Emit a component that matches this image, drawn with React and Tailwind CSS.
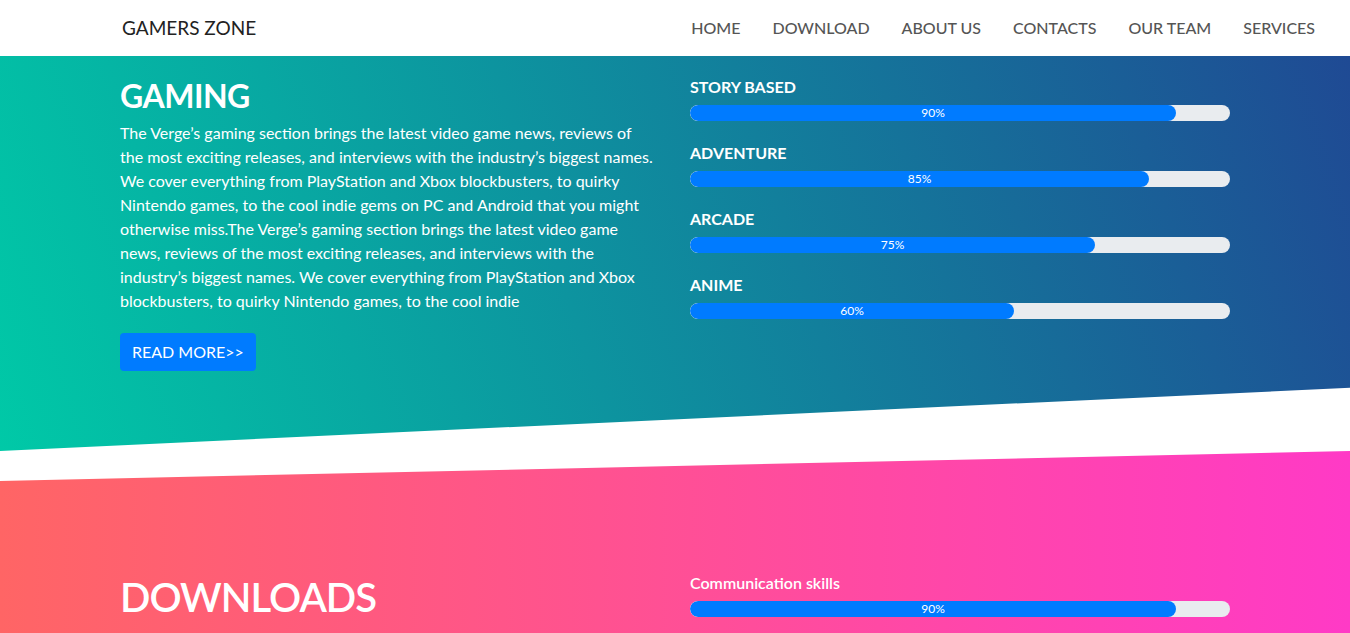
import React from "react";

const font = { fontFamily: "Lato, 'Noto Sans', sans-serif" };

function Bar({ label, value }) {
  return (
    <div className="mb-[20px]">
      <div className="text-[16px] leading-[24px] font-bold text-white">{label}</div>
      <div className="mt-[6px] h-[16px] w-[540px] rounded-full bg-[#e9ecef] flex overflow-hidden">
        <div
          className="h-full rounded-full bg-[#007bff] text-white text-[12px] leading-[16px] text-center"
          style={{ width: `${value}%` }}
        >
          {value}%
        </div>
      </div>
    </div>
  );
}

const lines = [
  "The Verge’s gaming section brings the latest video game news, reviews of",
  "the most exciting releases, and interviews with the industry’s biggest names.",
  "We cover everything from PlayStation and Xbox blockbusters, to quirky",
  "Nintendo games, to the cool indie gems on PC and Android that you might",
  "otherwise miss.The Verge’s gaming section brings the latest video game",
  "news, reviews of the most exciting releases, and interviews with the",
  "industry’s biggest names. We cover everything from PlayStation and Xbox",
  "blockbusters, to quirky Nintendo games, to the cool indie",
];

export default function App() {
  const links = ["HOME", "DOWNLOAD", "ABOUT US", "CONTACTS", "OUR TEAM", "SERVICES"];
  return (
    <div style={font} className="w-full overflow-hidden bg-white">
      <nav className="h-[56px] flex items-center justify-between pl-[122px] pr-[35px] bg-white">
        <div className="text-[19px] text-[#222]">GAMERS ZONE</div>
        <ul className="flex gap-[32px] text-[16px] font-medium text-[#555]">
          {links.map((l) => (
            <li key={l}>{l}</li>
          ))}
        </ul>
      </nav>

      <section className="h-[395px] bg-[linear-gradient(72deg,#00c9a7,#1f4a94)] [clip-path:polygon(0_0,100%_0,100%_84%,0_100%)]">
        <div className="flex pl-[120px] pt-[18px]">
          <div className="w-[570px] pr-[30px]">
            <h2 className="text-[32px] leading-[43px] font-bold tracking-[-0.5px] text-white mb-[4px]">GAMING</h2>
            <p className="text-[16px] leading-[24px] text-white w-[560px] whitespace-nowrap">
              {lines.map((l, i) => (
                <React.Fragment key={i}>
                  {l}
                  {i < lines.length - 1 && <br />}
                </React.Fragment>
              ))}
            </p>
            <button className="mt-[20px] h-[38px] px-[12px] rounded-[4px] bg-[#007bff] text-white text-[16px]">
              READ MORE&gt;&gt;
            </button>
          </div>
          <div className="pt-[1px]">
            <Bar label="STORY BASED" value={90} />
            <Bar label="ADVENTURE" value={85} />
            <Bar label="ARCADE" value={75} />
            <Bar label="ANIME" value={60} />
          </div>
        </div>
      </section>

      <section className="h-[300px] bg-[linear-gradient(to_right,#ff6565,#ff3ac6)] [clip-path:polygon(0_30px,100%_0,100%_100%,0_100%)]">
        <div className="flex pl-[120px] pt-[119px]">
          <div className="w-[570px] pr-[30px]">
            <h2 className="text-[40px] leading-[54px] font-semibold tracking-[-1px] text-white">DOWNLOADS</h2>
          </div>
          <div className="pt-[1px]">
            <div className="text-[16px] leading-[24px] font-semibold text-white">Communication skills</div>
            <div className="mt-[6px] h-[16px] w-[540px] rounded-full bg-[#e9ecef] flex overflow-hidden">
              <div
                className="h-full rounded-full bg-[#007bff] text-white text-[12px] leading-[16px] text-center"
                style={{ width: "90%" }}
              >
                90%
              </div>
            </div>
          </div>
        </div>
      </section>
    </div>
  );
}
